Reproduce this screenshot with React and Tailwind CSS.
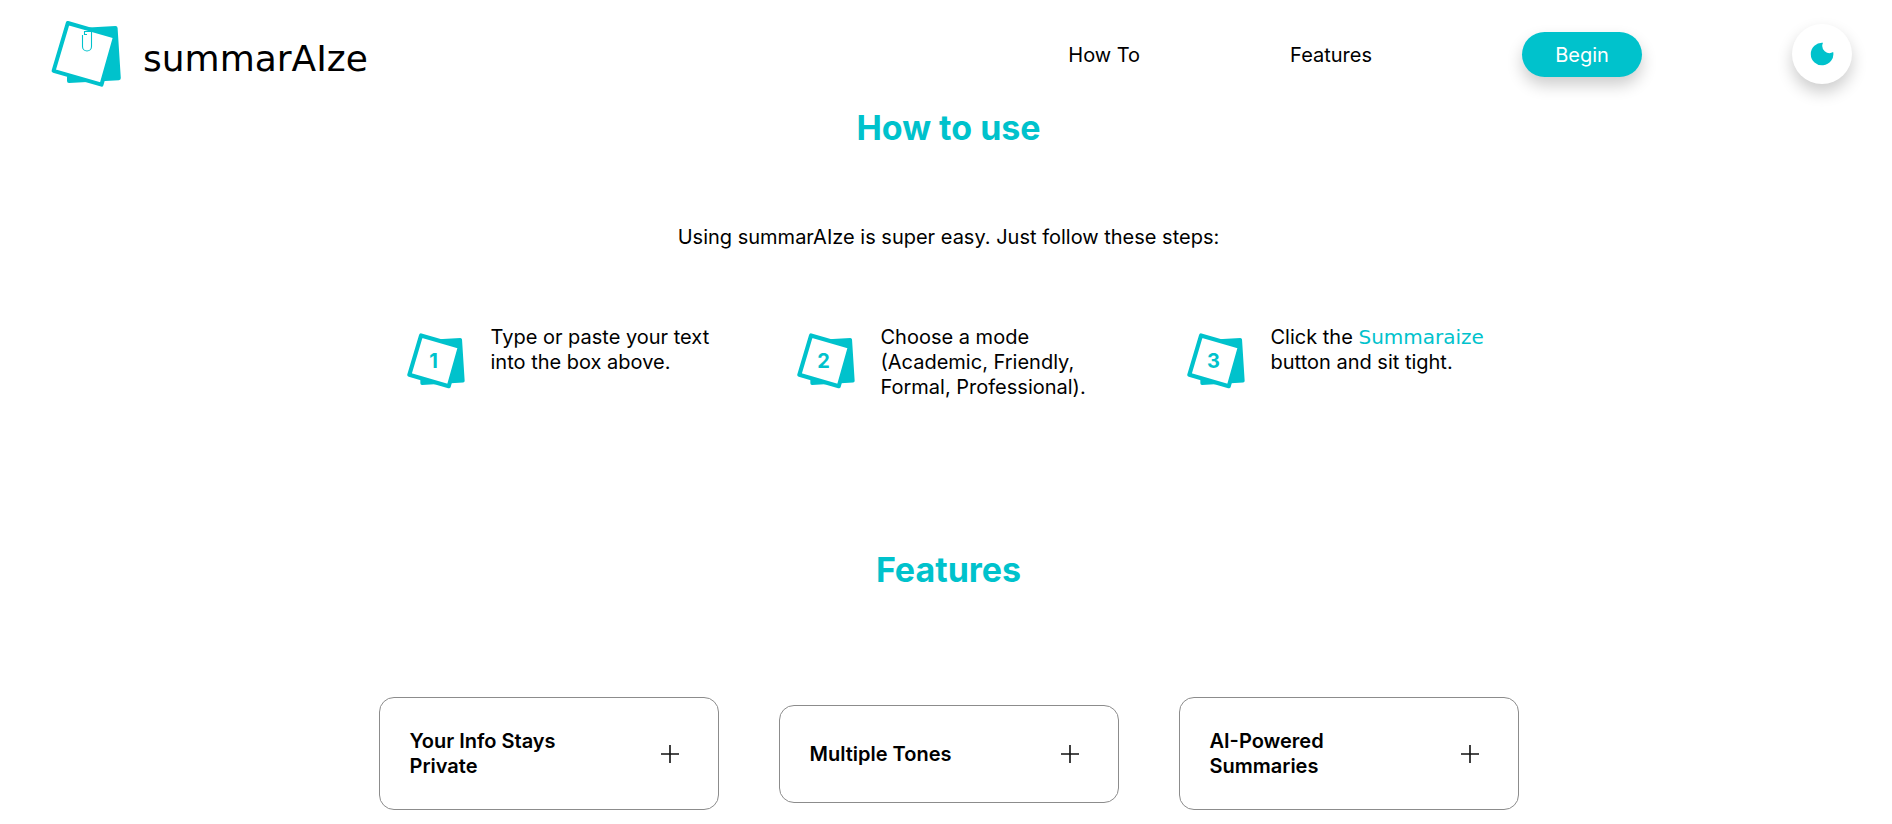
const steps = [
  { id: 1, text: 'Type or paste your text into the box above.' },
  { id: 2, text: 'Choose a mode (Academic, Friendly, Formal, Professional).' },
  {
    id: 3,
    text: (
      <>
        Click the <span className="font-['DejaVu_Sans',sans-serif] text-[#00c2cc]">Summaraize</span> button and sit
        tight.
      </>
    ),
  },
]

const features = ['Your Info Stays Private', 'Multiple Tones', 'AI-Powered Summaries']

function Notes({ className, strokeWidth = 4, children }) {
  return (
    <svg viewBox="0 0 70 68" className={className} aria-hidden="true">
      <path
        d="M16 57 L38 7.5 L64.5 6 Q66.5 6 66.6 8 L69.8 58 Q69.9 60 67.9 60.2 L18 63 Q16 63 16 61 Z"
        fill="#00c2cc"
      />
      <path
        d="M16.8 3 L64 16.7 L50.5 64.6 L2.6 50.8 Z"
        fill="#fff"
        stroke="#00c2cc"
        strokeWidth={strokeWidth}
        strokeLinejoin="round"
      />
      {children}
    </svg>
  )
}

function Header() {
  return (
    <header className="flex h-[108px] items-center justify-between pr-10 pl-[51px]">
      <a href="#" className="flex items-center gap-[22px]">
        <Notes className="h-[68px] w-[70px]">
          <path
            d="M31.5 15 V26.500 a4.500 4.500 0 0 0 9 0 V11.500 H33.500 V14.500 H36"
            fill="none"
            stroke="#00c2cc"
            strokeWidth="1.1"
          />
        </Notes>
        <span className="pt-2.5 font-['DejaVu_Sans',sans-serif] text-[36px] leading-10">summarAIze</span>
      </a>
      <nav className="flex items-center gap-[150px]">
        <a href="#how-to" className="pt-0.5">
          How To
        </a>
        <a href="#features" className="pt-0.5">
          Features
        </a>
        <button className="h-[45px] w-[120px] rounded-full bg-[#00c2cc] pt-0.5 text-white shadow-[0_8px_16px_rgba(0,0,0,0.2)]">
          Begin
        </button>
        <button
          aria-label="Toggle dark mode"
          className="flex size-[60px] items-center justify-center rounded-full bg-white shadow-[0_8px_16px_rgba(0,0,0,0.2)]"
        >
          <svg viewBox="0 0 24 24" className="size-6" aria-hidden="true">
            <path d="M13 0.800 A7.200 7.200 0 0 0 23.200 10 A11.300 11.300 0 1 1 13 0.800 Z" fill="#00c2cc" />
          </svg>
        </button>
      </nav>
    </header>
  )
}

export default function App() {
  return (
    <div className="bg-white font-['Inter',sans-serif] text-xl leading-[25px] text-black">
      <Header />
      <main className="pb-4 pl-[5px]">
        <section id="how-to" className="text-center">
          <h2 className="text-[34px] leading-10 font-bold text-[#00c2cc]">How to use</h2>
          <p className="mt-[77px]">Using summarAIze is super easy. Just follow these steps:</p>
          <ol className="mx-auto mt-[75px] grid max-w-[1170px] grid-cols-3 text-left">
            {steps.map((step) => (
              <li key={step.id} className="flex items-start gap-[26px] pl-[43px]">
                <div className="relative mt-2 shrink-0">
                  <Notes className="h-14 w-[58px]" strokeWidth={5} />
                  <span className="absolute inset-0 flex items-center justify-center pr-1 font-bold text-[#00c2cc]">
                    {step.id}
                  </span>
                </div>
                <p className="w-[230px]">{step.text}</p>
              </li>
            ))}
          </ol>
        </section>

        <section id="features" className="mt-[150px]">
          <h2 className="text-center text-[34px] leading-10 font-bold text-[#00c2cc]">Features</h2>
          <div className="mx-auto mt-[107px] grid max-w-[1140px] grid-cols-3 items-center gap-[60px]">
            {features.map((title) => (
              <button
                key={title}
                className="flex items-center justify-between rounded-[15px] border border-[#8c8c8c] p-[30px] text-left"
              >
                <span className="w-2/3 pt-px font-semibold">{title}</span>
                <svg viewBox="0 0 36 36" className="size-9" aria-hidden="true">
                  <path d="M18 9 V27 M9 18 H27" stroke="#111" strokeWidth="1.6" />
                </svg>
              </button>
            ))}
          </div>
        </section>
      </main>
    </div>
  )
}
